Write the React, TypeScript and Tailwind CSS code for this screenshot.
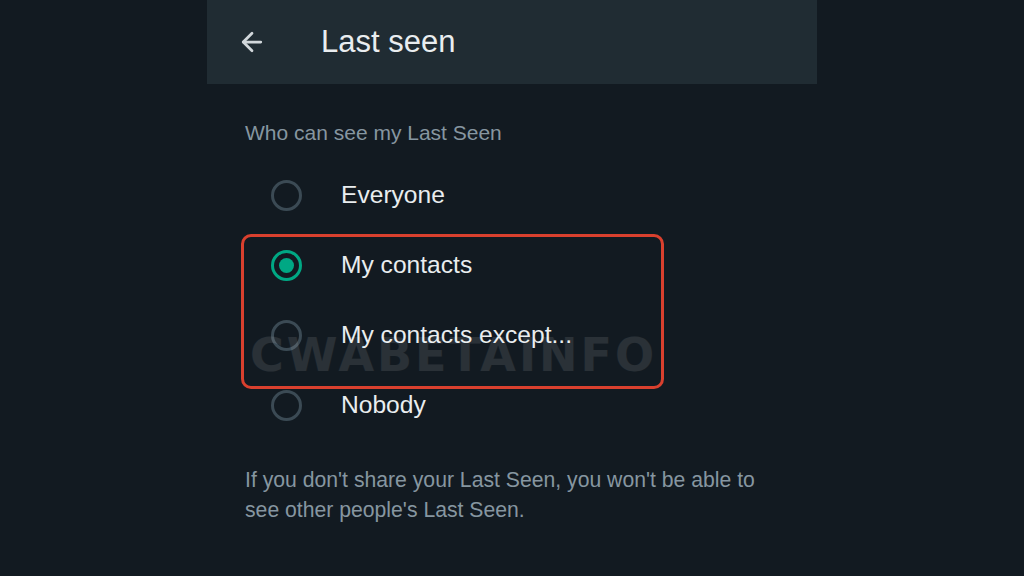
import { ArrowLeft } from "lucide-react";

const options = ["Everyone", "My contacts", "My contacts except...", "Nobody"];

function Radio({ checked }: { checked: boolean }) {
  if (checked) {
    return (
      <span className="flex h-[31px] w-[31px] items-center justify-center rounded-full border-[3px] border-[#00a884]">
        <span className="h-[15px] w-[15px] rounded-full bg-[#00a884]" />
      </span>
    );
  }
  return <span className="block h-[31px] w-[31px] rounded-full border-[3px] border-[#3b4a54]" />;
}

export default function App() {
  return (
    <div className="h-[576px] w-full overflow-hidden bg-[#121a21] font-['Liberation_Sans',sans-serif]">
      <div className="mx-auto w-[610px]">
        <header className="flex h-[84px] items-center bg-[#202c33] pl-[30px]">
          <ArrowLeft size={30} strokeWidth={2.2} className="text-[#d1d7db]" />
          <h1 className="ml-[54px] text-[31px] text-[#e9edef]">Last seen</h1>
        </header>

        <p className="mt-[35px] pl-[38px] text-[21px] leading-[28px] text-[#8696a0]">
          Who can see my Last Seen
        </p>

        <div className="relative mt-[13px]">
          {options.map((label, i) => (
            <div key={label} className="flex h-[70px] items-center pl-[64px]">
              <Radio checked={i === 1} />
              <span className="ml-[39px] text-[24.6px] text-[#e9edef]">{label}</span>
            </div>
          ))}

          <div className="pointer-events-none absolute left-[43px] top-[172px] select-none font-['DejaVu_Sans',sans-serif] text-[46px] font-bold leading-[46px] tracking-[3px] text-white/10">
            CWABETAINFO
          </div>

          <div className="pointer-events-none absolute left-[34px] top-[74px] h-[155px] w-[423px] rounded-[10px] border-[3px] border-[#d9402e]" />
        </div>

        <p className="mt-[25px] pl-[38px] text-[21.2px] leading-[30px] text-[#8696a0]">
          If you don't share your Last Seen, you won't be able to
          <br />
          see other people's Last Seen.
        </p>
      </div>
    </div>
  );
}
